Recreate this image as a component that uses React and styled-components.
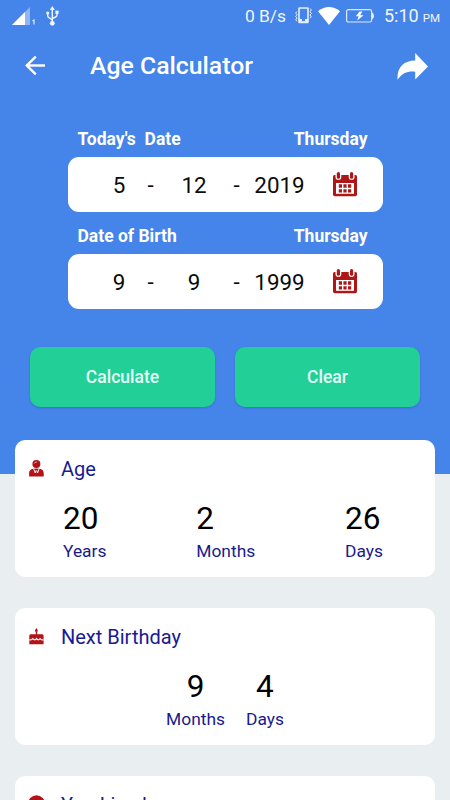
import React from "react"
import styled, { createGlobalStyle } from "styled-components"

const GlobalStyle = createGlobalStyle`
  * {
    box-sizing: border-box;
  }
  body {
    margin: 0;
    background-color: #e9eef1;
    font-family: Roboto, "Liberation Sans", sans-serif;
  }
`
const Container = styled.div`
  width: 100%;
  height: 800px;
  overflow: hidden;
  background-color: #e9eef1;
`
const Header = styled.header`
  height: 474px;
  background-color: #4584e8;
  color: white;
`
const StatusBar = styled.div`
  height: 32px;
  display: flex;
  align-items: center;
  padding: 0 10px 0 12px;
  color: #f0f6ff;

  svg {
    display: block;
    flex: none;
  }
`
const StatusLeft = styled.div`
  display: flex;
  align-items: center;
  gap: 10px;
  margin-right: auto;
`
const StatusRight = styled.div`
  display: flex;
  align-items: center;
`
const Speed = styled.span`
  font-size: 17.4px;
  line-height: 20px;
  margin-right: 9px;
`
const StatusIcons = styled.div`
  display: flex;
  align-items: center;
  gap: 6px;
  margin: -1px 10px 0 0;
`
const Clock = styled.span`
  font-size: 18px;
  line-height: 20px;
  padding-top: 2px;
  white-space: nowrap;

  small {
    font-size: 11.5px;
    margin-left: 4px;
  }
`
const AppBar = styled.div`
  height: 68px;
  display: flex;
  align-items: center;
  padding: 0 22px 0 25px;

  svg {
    display: block;
  }
`
const Title = styled.h1`
  margin: -1px auto 0 45px;
  font-size: 24.8px;
  font-weight: 500;
  line-height: 30px;
`
const Form = styled.div`
  display: flex;
  flex-direction: column;
  gap: 13px;
  padding: 28px 67.5px 0;
`
const FieldLabels = styled.div`
  display: flex;
  justify-content: space-between;
  padding: 1px 15px 0 10px;
  margin-bottom: 8px;
  font-size: 17.5px;
  font-weight: 700;
  line-height: 20px;
  white-space: pre;
`
const DateBox = styled.div`
  height: 55px;
  display: grid;
  grid-template-columns: 44px 19px 68px 17px 69px 62px;
  align-items: center;
  justify-items: center;
  padding-left: 29.5px;
  background-color: white;
  border-radius: 11px;
  color: #0c0c0c;
  font-size: 22.4px;
`
const Buttons = styled.div`
  display: flex;
  gap: 20px;
  padding: 38px 30px 0;
`
const Button = styled.button`
  flex: 1;
  height: 59.5px;
  border: none;
  border-radius: 10px;
  background-color: #21cf97;
  color: #e6fff6;
  font-family: inherit;
  font-size: 17.5px;
  font-weight: 500;
  box-shadow: 0 1px 2px rgba(20, 60, 110, 0.25);
`
const Cards = styled.main`
  display: flex;
  flex-direction: column;
  gap: 30.5px;
  margin-top: -34.5px;
  padding: 0 15px;
`
const Card = styled.section`
  position: relative;
  height: 137.5px;
  flex: none;
  background-color: white;
  border-radius: 10px;
`
const CardHeader = styled.div`
  display: flex;
  align-items: center;
  height: 58px;
  padding-left: 14px;

  svg {
    display: block;
  }
`
const CardTitle = styled.h2`
  margin: 0 0 0 17px;
  color: #1a1a94;
  font-size: 20px;
  font-weight: 400;
  line-height: 24px;
`
const Results = styled.div`
  display: flex;
  justify-content: ${(props) => (props.$centered ? "center" : "space-between")};
  gap: ${(props) => (props.$centered ? "21px" : "0")};
  padding: ${(props) => (props.$centered ? "2px 0 0" : "2px 52px 0 48px")};
  text-align: ${(props) => (props.$centered ? "center" : "left")};
`
const Amount = styled.div`
  color: #000;
  font-size: 31.5px;
  line-height: 38px;
`
const Unit = styled.div`
  color: #1a1a8c;
  font-size: 17.4px;
  line-height: 20px;
  margin-top: 3px;
`

const SignalIcon = () => (
  <svg width="24" height="18" viewBox="0 0 24 18">
    <path d="M0 18 L18 0 V18 Z" fill="#8fb5f2" />
    <path d="M0 18 L13 5 V18 Z" fill="#fff" />
    <path d="M20.5 14 L22 13 V17.5" fill="none" stroke="#e3edfd" strokeWidth="1.2" />
  </svg>
)

const UsbIcon = () => (
  <svg width="13" height="20" viewBox="0 0 13 20" fill="none" stroke="#f0f6ff" strokeWidth="1.4">
    <path d="M6.3 3 V17" />
    <path d="M1.7 7 V9.5 Q1.7 11 3 11.6 L6.3 13.8" />
    <path d="M11 6 V9 Q11 10.3 9.6 11 L6.3 12.6" />
    <path d="M6.3 0 L8.8 4 H3.8 Z" fill="#f0f6ff" stroke="none" />
    <circle cx="6.3" cy="17.3" r="2.4" fill="#f0f6ff" stroke="none" />
    <circle cx="1.7" cy="7" r="1.6" fill="#f0f6ff" stroke="none" />
    <path d="M9.4 4.6 h3.2 v3.2 h-3.2 Z" fill="#f0f6ff" stroke="none" />
  </svg>
)

const VibrateIcon = () => (
  <svg width="17" height="17" viewBox="0 0 17 17" fill="none" stroke="#e8f1ff">
    <rect x="4" y="1" width="9" height="14.5" rx="0.6" strokeWidth="1.6" />
    <path d="M4 13.3 H7 M10 13.3 H13" strokeWidth="2.4" />
    <path d="M4 15 H13" strokeWidth="1.6" />
    <path d="M1.8 4.5 L0.7 6 L2 7.7 L0.7 9.4 L2 11 L0.8 12.8 L1.8 14.3" strokeWidth="1" />
    <path d="M15.2 1.5 L16.3 3 L15 4.7 L16.3 6.4 L15 8 L16.2 9.8 L15.2 11.3" strokeWidth="1" />
  </svg>
)

const WifiIcon = () => (
  <svg width="22" height="18" viewBox="0 0 22 18">
    <path d="M0 4.2 Q11 -4.2 22 4.2 L11 18 Z" fill="#fff" />
  </svg>
)

const BatteryIcon = () => (
  <svg width="28" height="14" viewBox="0 0 28 14">
    <rect x="0.6" y="0.6" width="25" height="12.4" rx="1.8" fill="none" stroke="#dce9ff" strokeWidth="1.2" />
    <path d="M26 3.5 Q28 4 28 7 Q28 9.5 26 10.2 Z" fill="#e8f1ff" />
    <path d="M13.6 2.4 L9.8 7.2 H12.6 L11.2 11.4 L17.6 6.3 H14.2 L16.4 2.4 Z" fill="#fff" />
  </svg>
)

const BackIcon = () => (
  <svg width="20" height="20" viewBox="0 0 20 20" fill="none" stroke="#fff" strokeWidth="2.4">
    <path d="M20 9.5 H2" />
    <path d="M10.8 0.6 L1.8 9.5 L10.8 18.4" />
  </svg>
)

const ShareIcon = () => (
  <svg width="31" height="27" viewBox="0 0 31 27">
    <path d="M18.2 0 L31 13.4 L18.2 26.4 V18.7 C11 18 5 19.8 0.6 26.8 C-0.5 14.5 6.5 7.6 18.2 7.4 Z" fill="#fff" />
  </svg>
)

const CalendarIcon = () => (
  <svg width="24" height="25" viewBox="0 0 24 25">
    <path d="M1.5 3 H22.5 Q24 3 24 4.5 V22.5 Q24 24.2 22.3 24.2 H1.7 Q0 24.2 0 22.5 V4.5 Q0 3 1.5 3 Z" fill="#ad1717" />
    <rect x="2.5" y="-2" width="5.8" height="9.8" rx="2.9" fill="#fff" />
    <rect x="15.7" y="-2" width="5.8" height="9.8" rx="2.9" fill="#fff" />
    <rect x="3.8" y="0" width="3.2" height="6.8" rx="1.6" fill="#ad1717" />
    <rect x="17" y="0" width="3.2" height="6.8" rx="1.6" fill="#ad1717" />
    <rect x="3" y="11" width="18" height="10.8" fill="#fff" />
    <path d="M5.8 12.3 h3.2v3.4h-3.2z M10.4 12.3 h3.2v3.4h-3.2z M15 12.3 h3.2v3.4h-3.2z M5.8 17.2 h3.2v3.2h-3.2z M10.4 17.2 h3.2v3.2h-3.2z M15 17.2 h3.2v3.2h-3.2z" fill="#ad1717" />
  </svg>
)

const PersonIcon = () => (
  <svg width="15" height="17" viewBox="0 0 15 17">
    <circle cx="7.4" cy="4" r="4" fill="#b31217" />
    <path d="M5.2 3.4 Q6 2 7.8 1.9" fill="none" stroke="#f0c4c4" strokeWidth="1" />
    <path d="M0.1 16.6 V13 Q0.1 9.6 4.2 8.8 L7.4 8.6 L10.6 8.8 Q14.7 9.6 14.7 13 V16.6 Z" fill="#b31217" />
    <path d="M4.6 8.6 L6.3 13 L7 10.4 M10.2 8.6 L8.5 13 L7.8 10.4" fill="none" stroke="#fff" strokeWidth="0.9" />
  </svg>
)

const CakeIcon = () => (
  <svg width="15" height="17" viewBox="0 0 15 17">
    <path d="M7.4 0 Q9.2 2.3 8.8 3.3 Q7.4 4.9 6 3.3 Q5.6 2.3 7.4 0 Z" fill="#b31217" />
    <path d="M6.8 4 h1.3 v3 h-1.3 Z" fill="#b31217" />
    <path d="M1.6 6.3 H13.2 Q14.6 6.3 14.6 7.8 V16.2 H0.3 V7.8 Q0.3 6.3 1.6 6.3 Z" fill="#b31217" />
    <path d="M0.3 11.8 Q1.8 12.4 3.8 10.6 Q5.8 13 7.5 10.6 Q9.2 13 11.1 10.6 Q13 12.4 14.6 11.8" fill="none" stroke="#fff" strokeWidth="1.2" />
  </svg>
)

const LivedIcon = () => (
  <svg width="15" height="19" viewBox="0 0 15 19">
    <ellipse cx="7.5" cy="9.2" rx="8.5" ry="9" fill="#b31217" />
  </svg>
)

const DateField = ({ label, weekday, day, month, year }) => (
  <div>
    <FieldLabels>
      <span>{label}</span>
      <span>{weekday}</span>
    </FieldLabels>
    <DateBox>
      <span>{day}</span>
      <span>-</span>
      <span>{month}</span>
      <span>-</span>
      <span>{year}</span>
      <CalendarIcon />
    </DateBox>
  </div>
)

const ResultCard = ({ icon, title, items, centered }) => (
  <Card>
    <CardHeader>
      {icon}
      <CardTitle>{title}</CardTitle>
    </CardHeader>
    <Results $centered={centered}>
      {items.map((item) => (
        <div key={item.unit}>
          <Amount>{item.amount}</Amount>
          <Unit>{item.unit}</Unit>
        </div>
      ))}
    </Results>
  </Card>
)

const age = [
  { amount: 20, unit: "Years" },
  { amount: 2, unit: "Months" },
  { amount: 26, unit: "Days" },
]
const nextBirthday = [
  { amount: 9, unit: "Months" },
  { amount: 4, unit: "Days" },
]

export default function App() {
  return (
    <Container>
      <GlobalStyle />
      <Header>
        <StatusBar>
          <StatusLeft>
            <SignalIcon />
            <UsbIcon />
          </StatusLeft>
          <StatusRight>
            <Speed>0 B/s</Speed>
            <StatusIcons>
              <VibrateIcon />
              <WifiIcon />
              <BatteryIcon />
            </StatusIcons>
            <Clock>5:10<small>PM</small></Clock>
          </StatusRight>
        </StatusBar>
        <AppBar>
          <BackIcon />
          <Title>Age Calculator</Title>
          <ShareIcon />
        </AppBar>
        <Form>
          <DateField label="Today's  Date" weekday="Thursday" day="5" month="12" year="2019" />
          <DateField label="Date of Birth" weekday="Thursday" day="9" month="9" year="1999" />
        </Form>
        <Buttons>
          <Button>Calculate</Button>
          <Button>Clear</Button>
        </Buttons>
      </Header>
      <Cards>
        <ResultCard icon={<PersonIcon />} title="Age" items={age} />
        <ResultCard icon={<CakeIcon />} title="Next Birthday" items={nextBirthday} centered />
        <ResultCard icon={<LivedIcon />} title="You Lived" items={[]} />
      </Cards>
    </Container>
  )
}
